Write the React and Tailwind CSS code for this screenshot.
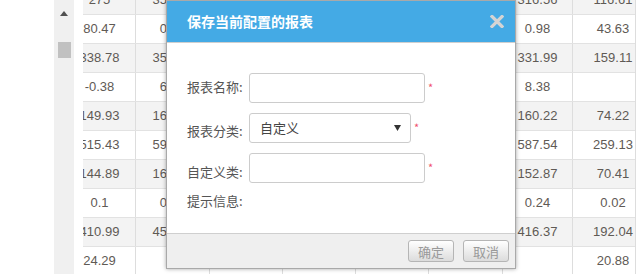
import { useState } from "react";

const rows = [
  ["275", "353.42", "316.56", "116.61"],
  ["80.47", "0.45", "0.98", "43.63"],
  ["338.78", "356.10", "331.99", "159.11"],
  ["-0.38", "6.21", "8.38", ""],
  ["149.93", "163.57", "160.22", "74.22"],
  ["515.43", "594.86", "587.54", "259.13"],
  ["144.89", "161.30", "152.87", "70.41"],
  ["0.1", "0.05", "0.24", "0.02"],
  ["410.99", "452.71", "416.37", "192.04"],
  ["24.29", "", "", "20.88"],
];

function DataRow({ cells, index }) {
  const bg = index % 2 === 0 ? "bg-[#f3f3f3]" : "bg-white";
  return (
    <div className={`flex h-[29px] border-b border-[#e2e2e2] ${bg}`}>
      <div className="w-[72px] shrink-0 flex items-center justify-center border-r border-[#dddddd]">
        {cells[0]}
      </div>
      <div className="w-[74px] shrink-0 flex items-center justify-center border-r border-[#dddddd]">
        {cells[1]}
      </div>
      <div className="w-[73px] shrink-0 border-r border-[#dddddd]" />
      <div className="w-[73px] shrink-0 border-r border-[#dddddd]" />
      <div className="w-[73px] shrink-0 border-r border-[#dddddd]" />
      <div className="w-[74px] shrink-0 border-r border-[#dddddd]" />
      <div className="w-[70px] shrink-0 flex items-center justify-center border-r border-[#dddddd]">
        {cells[2]}
      </div>
      <div className="w-[80px] shrink-0 flex items-center justify-center">
        {cells[3]}
      </div>
    </div>
  );
}

function FormRow({ label, children, labelPad = "pt-[6px]" }) {
  return (
    <div className="flex items-start">
      <span className={`w-[62px] shrink-0 whitespace-nowrap ${labelPad}`}>{label}</span>
      {children}
      <span className="text-[#f0506e] text-[11px] ml-[3px] mt-[6px]">*</span>
    </div>
  );
}

function SaveDialog() {
  const [name, setName] = useState("");
  const [custom, setCustom] = useState("");
  return (
    <div className="absolute left-[166px] top-0 w-[350px] h-[269px] flex flex-col bg-white border border-[#a9a9a9] shadow-[0_0_4px_rgba(0,0,0,0.35)] font-['Noto_Sans_CJK_SC',sans-serif] text-[13px] text-[#555555]">
      <div className="h-[42px] shrink-0 flex items-center justify-between bg-[#44aae5] border-b border-[#cfcfcf] pl-[20px] pr-[11px]">
        <span className="text-white font-bold text-[14px]">保存当前配置的报表</span>
        <svg width="14" height="13" viewBox="0 0 14 13">
          <path d="M2 1.5 L12 11.5 M12 1.5 L2 11.5" stroke="#d4d4d4" strokeWidth="3.2" strokeLinecap="square" />
        </svg>
      </div>
      <div className="flex-1 flex flex-col pl-[20px] pt-[30px] gap-[10px]">
        <FormRow label="报表名称:" labelPad="pt-[4px]">
          <input
            value={name}
            onChange={(e) => setName(e.target.value)}
            className="w-[176px] h-[30px] border border-[#cccccc] rounded-[3px] outline-none px-2"
          />
        </FormRow>
        <FormRow label="报表分类:" labelPad="pt-[8px]">
          <div className="w-[162px] h-[30px] border border-[#cccccc] rounded-[3px] flex items-center justify-between pl-[10px] pr-[9px] text-[#444444]">
            <span>自定义</span>
            <svg width="7" height="6" viewBox="0 0 7 6">
              <path d="M0 0 L7 0 L3.5 6 Z" fill="#333333" />
            </svg>
          </div>
        </FormRow>
        <FormRow label="自定义类:" labelPad="pt-[9px]">
          <input
            value={custom}
            onChange={(e) => setCustom(e.target.value)}
            className="w-[176px] h-[30px] border border-[#cccccc] rounded-[3px] outline-none px-2"
          />
        </FormRow>
        <div className="-mt-[2px]">提示信息:</div>
      </div>
      <div className="h-[35px] shrink-0 flex items-center justify-end gap-[9px] pr-[6px] bg-[#efefef] border-t border-[#cfcfcf]">
        <button className="w-[46px] h-[22px] rounded-[3px] border border-[#b5b5b5] bg-gradient-to-b from-white to-[#dcdcdc] text-[#999999] text-[13px] leading-none">
          确定
        </button>
        <button className="w-[46px] h-[22px] rounded-[3px] border border-[#b5b5b5] bg-gradient-to-b from-white to-[#dcdcdc] text-[#999999] text-[13px] leading-none">
          取消
        </button>
      </div>
    </div>
  );
}

export default function App() {
  return (
    <div className="relative w-[643px] h-[274px] overflow-hidden bg-white flex font-['Liberation_Sans',Arial,sans-serif] text-[13px] text-[#5f5a55]">
      <div className="w-[54px] shrink-0" />
      <div className="w-[20px] shrink-0 bg-[#f0f0f0] flex flex-col items-center pt-[11px]">
        <svg width="8" height="5" viewBox="0 0 8 5">
          <path d="M0 5 L4 0 L8 5 Z" fill="#505050" />
        </svg>
        <div className="w-[13px] h-[16px] bg-[#c1c1c1] mt-[26px]" />
      </div>
      <div className="w-[9px] shrink-0" />
      <div className="w-[553px] shrink-0 overflow-hidden border-r border-[#dddddd]">
        <div className="ml-[-19px] mt-[-14px] w-[589px]">
          {rows.map((cells, i) => (
            <DataRow key={i} cells={cells} index={i} />
          ))}
        </div>
      </div>
      <SaveDialog />
    </div>
  );
}
